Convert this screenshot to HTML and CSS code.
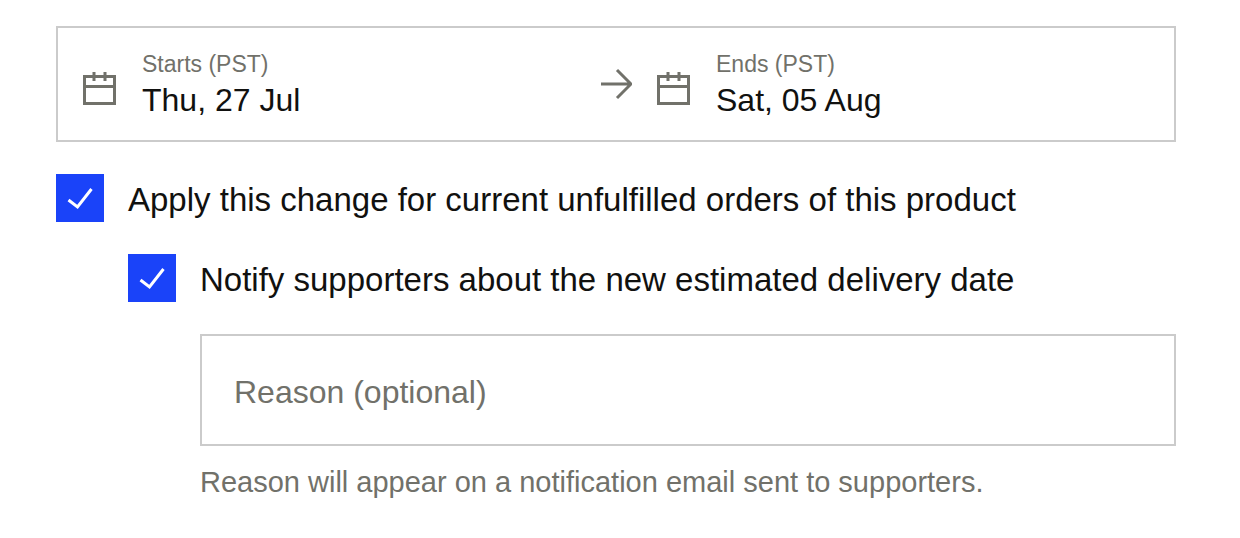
FILE: index.html
```
<!DOCTYPE html>
<html lang="en">
<head>
  <meta charset="UTF-8">
  <meta name="viewport" content="width=device-width, initial-scale=1.0">
  <title>Estimated delivery date</title>
  <link rel="stylesheet" href="styles.css">
</head>
<body>
  <form class="delivery-form">
    <div class="date-range">
      <button type="button" class="date-field">
        <svg class="calendar-icon" viewBox="0 0 36 44" aria-hidden="true">
          <path d="M2.5 14.5h30v27h-30zM2.5 24.5h30M12 10v9M23 10v9"/>
        </svg>
        <span class="date-text">
          <span class="date-label">Starts (PST)</span>
          <span class="date-value">Thu, 27 Jul</span>
        </span>
      </button>
      <svg class="arrow-icon" viewBox="0 0 32 32" aria-hidden="true">
        <path d="M1 16h30M17 2l14 14-14 14"/>
      </svg>
      <button type="button" class="date-field">
        <svg class="calendar-icon" viewBox="0 0 36 44" aria-hidden="true">
          <path d="M2.5 14.5h30v27h-30zM2.5 24.5h30M12 10v9M23 10v9"/>
        </svg>
        <span class="date-text">
          <span class="date-label">Ends (PST)</span>
          <span class="date-value">Sat, 05 Aug</span>
        </span>
      </button>
    </div>

    <div class="option">
      <input type="checkbox" id="apply-change" checked>
      <label for="apply-change">Apply this change for current unfulfilled orders of this product</label>
    </div>

    <div class="nested">
      <div class="option">
        <input type="checkbox" id="notify" checked>
        <label for="notify">Notify supporters about the new estimated delivery date</label>
      </div>

      <div class="nested reason">
        <input type="text" id="reason" placeholder="Reason (optional)" aria-label="Reason (optional)" aria-describedby="reason-hint">
        <p id="reason-hint">Reason will appear on a notification email sent to supporters.</p>
      </div>
    </div>
  </form>
</body>
</html>
```
FILE: styles.css
```
* {
  box-sizing: border-box;
}
body {
  margin: 0;
  background: #fff;
  color: #11110f;
  font-family: "Liberation Sans", Arial, sans-serif;
  font-size: 32px;
  line-height: 40px;
}
.delivery-form {
  padding: 26px 64px 32px 56px;
}

/* Date range */
.date-range {
  display: grid;
  grid-template-columns: 1fr 32px 1fr;
  align-items: center;
  border: 2px solid #cbcbcb;
}
.date-field {
  display: flex;
  align-items: center;
  gap: 24px;
  padding: 20px 24px;
  border: none;
  background: none;
  color: inherit;
  font: inherit;
  text-align: left;
  cursor: pointer;
}
.date-text {
  display: flex;
  flex-direction: column;
}
.date-label {
  color: #71716a;
  font-size: 23px;
  line-height: 32px;
}
.calendar-icon,
.arrow-icon {
  flex: none;
  fill: none;
  stroke: #71716a;
  stroke-width: 3;
}
.calendar-icon {
  width: 36px;
  height: 44px;
}
.arrow-icon {
  width: 32px;
  height: 32px;
}

/* Checkboxes */
.option {
  display: flex;
  align-items: center;
  gap: 24px;
  margin-top: 32px;
}
.option label {
  padding-top: 4px;
  font-size: 33px;
}
.option input {
  appearance: none;
  flex: none;
  width: 48px;
  height: 48px;
  margin: 0;
  border: 2px solid #cbcbcb;
  cursor: pointer;
}
.option input:checked {
  border: none;
  background: #1a43f9 url("data:image/svg+xml,%3Csvg xmlns='http://www.w3.org/2000/svg' viewBox='0 0 48 48'%3E%3Cpath d='M12.5 26l9 7 14-18' fill='none' stroke='white' stroke-width='3'/%3E%3C/svg%3E") center / 48px 48px no-repeat;
}
.nested {
  margin-left: 72px;
}

/* Reason */
.reason {
  margin-top: 32px;
}
.reason input {
  display: block;
  width: 100%;
  height: 112px;
  padding: 4px 32px 0;
  border: 2px solid #cbcbcb;
  border-radius: 0;
  color: inherit;
  font: inherit;
}
.reason input::placeholder {
  color: #71716a;
  opacity: 1;
}
.reason p {
  margin: 16px 0 0;
  color: #71716a;
  font-size: 29px;
}
```
